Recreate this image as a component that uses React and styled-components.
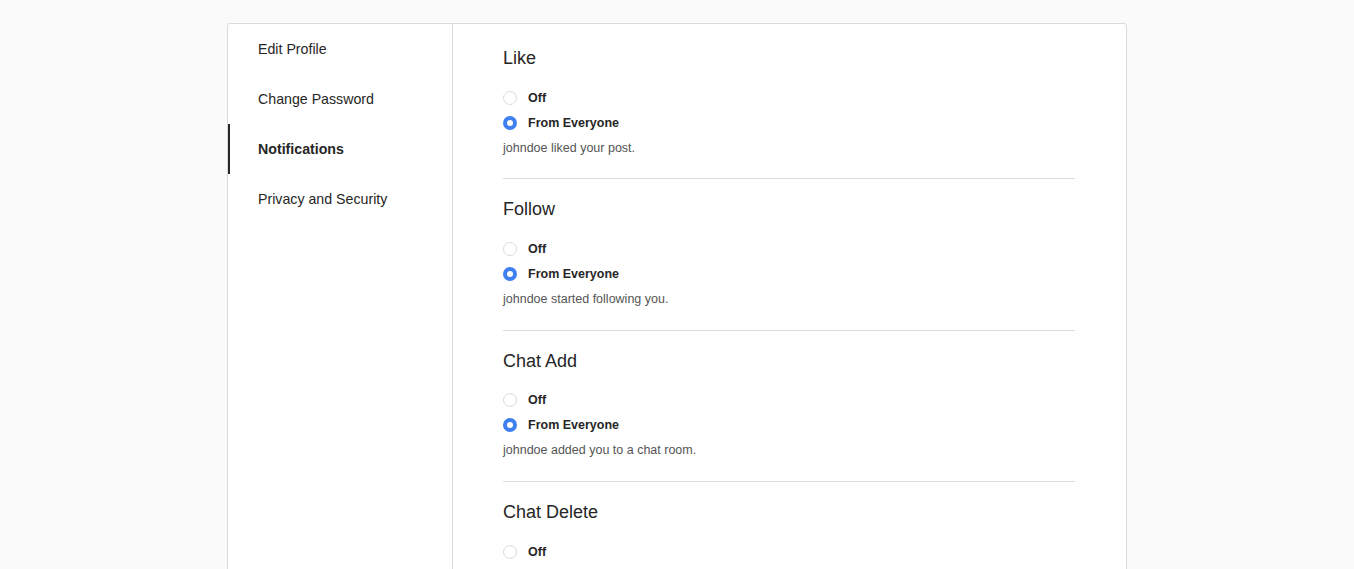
import React, { useState } from "react";
import styled, { createGlobalStyle } from "styled-components";

const GlobalStyle = createGlobalStyle`
  * { box-sizing: border-box; }
  html, body { margin: 0; padding: 0; background: #fafafa; }
  body {
    font-family: "Liberation Sans", Arial, Helvetica, sans-serif;
    color: #262626;
  }
`;

const Page = styled.div`
  padding-top: 23px;
`;

const Card = styled.div`
  width: 900px;
  margin: 0 auto;
  background: #fff;
  border: 1px solid #dbdbdb;
  border-radius: 3px;
  display: flex;
  min-height: 700px;
`;

const Sidebar = styled.nav`
  width: 225px;
  flex: 0 0 225px;
  border-right: 1px solid #dbdbdb;
  display: flex;
  flex-direction: column;
`;

const NavItem = styled.div`
  height: 50px;
  display: flex;
  align-items: center;
  padding-left: 28px;
  font-size: 14.2px;
  font-weight: ${(p) => (p.$active ? 700 : 400)};
  color: #262626;
  border-left: 2px solid ${(p) => (p.$active ? "#262626" : "transparent")};
  cursor: pointer;
`;

const Main = styled.main`
  flex: 1;
  padding: 4px 51px 0 50px;
`;

const Section = styled.section`
  padding: 18px 0 18.4px;
  border-bottom: 1px solid #dbdbdb;
`;

const Heading = styled.h3`
  margin: 0 0 15px;
  font-size: 18px;
  line-height: 24px;
  font-weight: 400;
  color: #262626;
`;

const Option = styled.label`
  height: 25px;
  display: flex;
  align-items: center;
  gap: 11px;
  font-size: 12.5px;
  font-weight: 700;
  color: #262626;
  cursor: pointer;
`;

const Radio = styled.input`
  appearance: none;
  margin: 0;
  width: 14px;
  height: 14px;
  border-radius: 50%;
  border: 1px solid #dbdbdb;
  background: #fff;
  flex: 0 0 14px;
  cursor: pointer;
  &:checked {
    border: 4.5px solid #3f80f0;
    background: #fff;
  }
`;

const Description = styled.div`
  height: 25px;
  display: flex;
  align-items: center;
  font-size: 12.5px;
  color: #555;
`;

const sections = [
  { key: "like", title: "Like", desc: "johndoe liked your post." },
  { key: "follow", title: "Follow", desc: "johndoe started following you." },
  { key: "chatAdd", title: "Chat Add", desc: "johndoe added you to a chat room." },
  { key: "chatDelete", title: "Chat Delete", desc: "johndoe deleted you from a chat room." },
  { key: "chatMessage", title: "Chat Message", desc: "johndoe sent you a message." },
];

const navItems = ["Edit Profile", "Change Password", "Notifications", "Privacy and Security"];

export default function App() {
  const [values, setValues] = useState(
    Object.fromEntries(sections.map((s) => [s.key, "everyone"]))
  );

  return (
    <>
      <GlobalStyle />
      <Page>
        <Card>
          <Sidebar>
            {navItems.map((item) => (
              <NavItem key={item} $active={item === "Notifications"}>
                {item}
              </NavItem>
            ))}
          </Sidebar>
          <Main>
            {sections.map((s) => (
              <Section key={s.key}>
                <Heading>{s.title}</Heading>
                <Option>
                  <Radio
                    type="radio"
                    name={s.key}
                    checked={values[s.key] === "off"}
                    onChange={() => setValues({ ...values, [s.key]: "off" })}
                  />
                  Off
                </Option>
                <Option>
                  <Radio
                    type="radio"
                    name={s.key}
                    checked={values[s.key] === "everyone"}
                    onChange={() => setValues({ ...values, [s.key]: "everyone" })}
                  />
                  From Everyone
                </Option>
                <Description>{s.desc}</Description>
              </Section>
            ))}
          </Main>
        </Card>
      </Page>
    </>
  );
}
